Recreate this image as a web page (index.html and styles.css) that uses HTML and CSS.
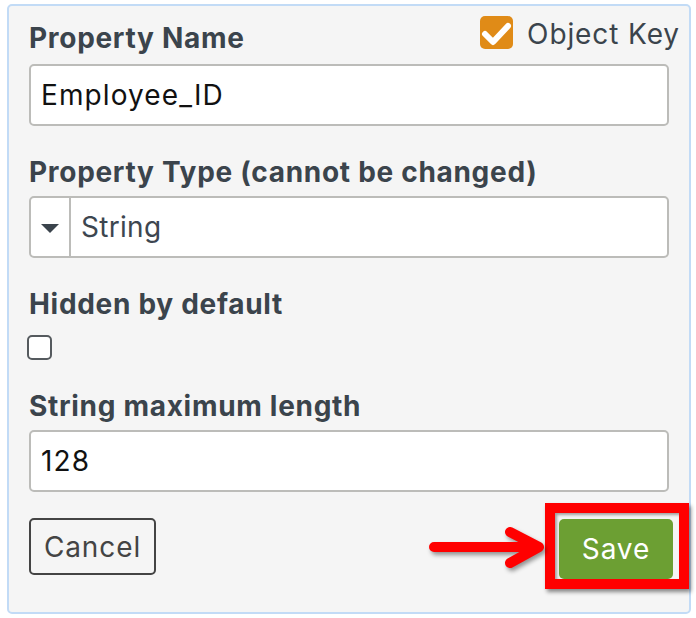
FILE: index.html
```html
<!DOCTYPE html>
<html lang="en">
<head>
<meta charset="utf-8">
<title>Edit Property</title>
<link rel="stylesheet" href="styles.css">
</head>
<body>
<form class="panel">
  <div class="header">
    <label class="label">Property Name</label>
    <span class="obj-key">
      <span class="check-on">
        <svg width="33" height="33" viewBox="0 0 33 33"><path d="M5 18 L13 26 L28 10" fill="none" stroke="#fff" stroke-width="6" stroke-linecap="round" stroke-linejoin="round"/></svg>
      </span>
      <span class="obj-text">Object Key</span>
    </span>
  </div>
  <div class="input">Employee_ID</div>

  <div class="group">
    <div class="label">Property Type (cannot be changed)</div>
    <div class="select">
      <span class="caret-box"><span class="caret"></span></span>
      <span class="select-value">String</span>
    </div>
  </div>

  <div class="group">
    <div class="label">Hidden by default</div>
    <span class="check-off"></span>
  </div>

  <div class="group">
    <div class="label">String maximum length</div>
    <div class="input">128</div>
  </div>

  <div class="actions">
    <span class="btn cancel">Cancel</span>
    <span class="save-wrap">
      <svg class="arrow" width="122" height="46" viewBox="0 0 122 46"><path d="M7 22 L110 22 M83 7 L112 22 L83 38" fill="none" stroke="#f00" stroke-width="10" stroke-linecap="round" stroke-linejoin="round"/></svg>
      <span class="btn save">Save</span>
    </span>
  </div>
</form>
</body>
</html>
```

FILE: styles.css
```css
* { box-sizing: border-box; }
html, body { margin: 0; padding: 0; background: #ffffff; }
body { font-family: "Inter", "Lato", "Liberation Sans", sans-serif; }

.panel {
  width: 684px;
  margin: 4px 0 0 7px;
  border: 2px solid #c2dbf6;
  border-radius: 5px;
  background: #f5f5f5;
  padding: 10px 20px 23px 20px;
}

.header {
  display: flex;
  justify-content: space-between;
  align-items: flex-end;
  margin-bottom: 10px;
}

.label {
  display: block;
  font-size: 28px;
  line-height: 32px;
  font-weight: 700;
  color: #3b444c;
  letter-spacing: 0.7px;
}

.obj-key {
  display: flex;
  align-items: center;
  gap: 14px;
  margin-bottom: 5px;
  margin-right: -11px;
}
.check-on {
  width: 33px;
  height: 33px;
  border-radius: 5px;
  background: #e08b17;
  display: block;
}
.check-on svg { display: block; }
.obj-text {
  font-size: 28px;
  line-height: 33px;
  color: #3b444c;
  letter-spacing: 0.9px;
  position: relative;
  top: 2px;
}

.input {
  height: 62px;
  border: 2px solid #bcbcb9;
  border-radius: 5px;
  background: #ffffff;
  padding: 0 10px;
  font-size: 28px;
  line-height: 58px;
  color: #111;
  letter-spacing: 1.1px;
}

.group { margin-top: 30px; }
.group .label { margin-bottom: 8px; }

.select {
  display: flex;
  height: 62px;
  border: 2px solid #bcbcb9;
  border-radius: 5px;
  background: #ffffff;
}
.caret-box {
  width: 40px;
  border-right: 2px solid #bcbcb9;
  display: flex;
  align-items: center;
  justify-content: center;
}
.caret {
  width: 0;
  height: 0;
  border-left: 9px solid transparent;
  border-right: 9px solid transparent;
  border-top: 9px solid #3b444c;
  margin-top: 2px;
}
.select-value {
  padding-left: 10px;
  font-size: 28px;
  line-height: 58px;
  color: #3d4650;
  letter-spacing: 0.3px;
}

.check-off {
  display: block;
  width: 25px;
  height: 25px;
  border: 2px solid #555a5e;
  border-radius: 5px;
  background: #fff;
  margin-top: 15px;
  margin-left: -2px;
}

.actions {
  display: flex;
  justify-content: space-between;
  align-items: flex-start;
  margin-top: 11px;
}

.btn {
  display: flex;
  align-items: center;
  justify-content: center;
  font-size: 28px;
  letter-spacing: 0.9px;
  border-radius: 5px;
}
.cancel {
  width: 127px;
  height: 57px;
  margin-top: 15px;
  border: 2px solid #444;
  color: #444;
  background: #f5f5f5;
}

.save-wrap {
  position: relative;
  display: block;
  border: 10px solid #ff0000;
  padding: 6px 6px 0 4px;
  margin-right: -20px;
  background: #f5f5f5;
  box-shadow: 2px 3px 4px rgba(0,0,0,0.45), inset 2px 2px 3px rgba(0,0,0,0.35);
}
.save {
  width: 114px;
  height: 60px;
  background: #6c9f33;
  color: #ffffff;
}
.arrow {
  position: absolute;
  left: -128px;
  top: 12px;
  filter: drop-shadow(2px 3px 2px rgba(0,0,0,0.4));
}
```
